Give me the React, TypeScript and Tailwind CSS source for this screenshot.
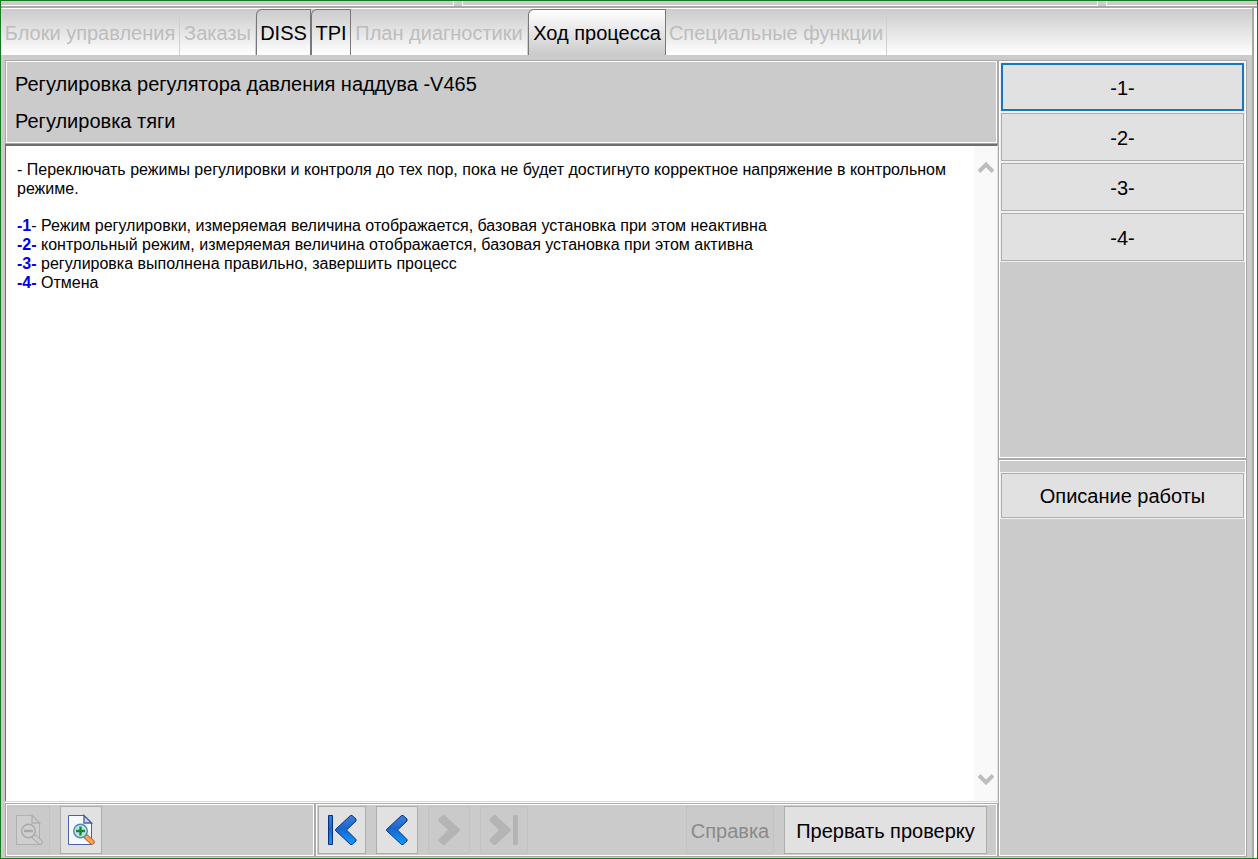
import { useState } from "react";
import clsx from "clsx";

const tabs = [
  { title: "Блоки управления", enabled: false, width: "w-[179px]" },
  { title: "Заказы", enabled: false, width: "w-[76px]" },
  { title: "DISS", enabled: true, width: "w-[55px]" },
  { title: "TPI", enabled: true, width: "w-[40px]" },
  { title: "План диагностики", enabled: false, width: "w-[177px]" },
  { title: "Ход процесса", enabled: true, width: "w-[138px]" },
  { title: "Специальные функции", enabled: false, width: "w-[221px]" },
];

const steps = [
  { key: "-1", tail: "-", text: "Режим регулировки, измеряемая величина отображается, базовая установка при этом неактивна" },
  { key: "-2-", tail: "", text: "контрольный режим, измеряемая величина отображается, базовая установка при этом активна" },
  { key: "-3-", tail: "", text: "регулировка выполнена правильно, завершить процесс" },
  { key: "-4-", tail: "", text: "Отмена" },
];

const answers = ["-1-", "-2-", "-3-", "-4-"];

function ZoomIcon({ plus = false, disabled = false }) {
  const line = disabled ? "#b0b0b0" : "#4a62a0";
  return (
    <svg width="28" height="32" viewBox="0 0 28 32" aria-hidden="true">
      <path d="M1.500 1.500H17L24.500 9V30.500H1.500Z" fill={disabled ? "#cfcfcf" : "#f4faff"} stroke={line} />
      <path d="M17 1.500V9H24.500Z" fill={disabled ? "#cfcfcf" : "#c9d8f5"} stroke={line} strokeWidth="1.400" />
      <path d="M19.500 23L25 28" stroke={disabled ? "#aaaaaa" : "#b8693a"} strokeWidth="5.500" strokeLinecap="round" />
      <path d="M19.500 23L25 28" stroke={disabled ? "#cecece" : "#ffa54f"} strokeWidth="3.500" strokeLinecap="round" />
      <circle cx="13.500" cy="17" r="6.800" fill={disabled ? "#cfcfcf" : "#bfe3f2"} stroke={disabled ? "#a8a8a8" : "#5589a8"} strokeWidth="1.400" />
      <path d={plus ? "M9 17H18M13.500 12.500V21.500" : "M9 17H18"} stroke={disabled ? "#a8a8a8" : "#168a2c"} strokeWidth="2.400" />
    </svg>
  );
}

function ArrowIcon({ bar = false, forward = false, disabled = false }) {
  return (
    <svg
      width={bar ? 30 : 22}
      height="32"
      viewBox={bar ? "0 0 30 32" : "8 0 22 32"}
      className={forward ? "-scale-x-100" : ""}
      aria-hidden="true"
    >
      <defs>
        <linearGradient id="arrowBlue" x1="0" y1="0" x2="0" y2="1">
          <stop offset="0" stopColor="#3f7fdc" />
          <stop offset="0.45" stopColor="#1766cf" />
          <stop offset="1" stopColor="#0c9bff" />
        </linearGradient>
      </defs>
      <g fill={disabled ? "#b4b4b4" : "url(#arrowBlue)"} stroke={disabled ? "#b4b4b4" : "#0b2f78"} strokeLinejoin="round">
        {bar && <rect x="1.500" y="1.500" width="4" height="29" />}
        <path d="M23.500 1.500H25L29 5V7L19.500 16L29 25.500V27L25 30.500H23.500L8.500 16.500V15.500Z" />
      </g>
    </svg>
  );
}

type SideButtonProps = {
  label: string;
  size?: string;
  focused?: boolean;
  onClick?: () => void;
};

function SideButton({ label, size = "h-12 pt-0.5", focused = false, onClick }: SideButtonProps) {
  return (
    <button
      type="button"
      onClick={onClick}
      className={clsx(
        "w-full bg-[#e1e1e1] text-[20px] leading-6 outline-none",
        size,
        focused ? "border-2 border-[#1577bd]" : "border border-[#adadad]"
      )}
    >
      {label}
    </button>
  );
}

const toolButton = "h-12 flex items-center justify-center border";
const toolOn = "border-[#adadad] bg-[#e1e1e1]";
const toolOff = "border-[#c2c2c2] bg-[#cacaca]";
// grey outer line with a white line inside it
const panel = "border border-[#a9a9a9] bg-white p-px";

export default function App() {
  const [tab, setTab] = useState("Ход процесса");
  const [answer, setAnswer] = useState("-1-");

  return (
    <div className="h-screen flex flex-col overflow-hidden border border-[#167a20] bg-[#cbcbcb] font-['Liberation_Sans',Arial,sans-serif] text-black">
      <div className="h-[7px] shrink-0 flex gap-2 border-b-2 border-[#a9a9a9]">
        <div className="w-[453px] border-r border-b border-white" />
        <div className="flex-1 border-x border-b border-white" />
        <div className="w-[151px] border-l border-b border-white" />
      </div>

      <div className="flex-1 min-h-0 flex">
        <div className="flex-1 min-w-0 flex flex-col">
          <div className="h-[47px] shrink-0 flex border-t border-white bg-linear-to-b from-[#cbcbcb] to-white" role="tablist">
            {tabs.map((item) => (
              <button
                key={item.title}
                type="button"
                role="tab"
                aria-selected={tab === item.title}
                disabled={!item.enabled}
                onClick={() => setTab(item.title)}
                className={clsx(
                  "shrink-0 whitespace-nowrap text-[20px]",
                  item.width,
                  item.enabled
                    ? "border-x border-t border-[#777777] rounded-tl-md"
                    : "pt-px text-[#bdbdbd] border-r border-[#cfcfcf]",
                  tab === item.title && "bg-linear-to-b from-white to-[#cbcbcb]"
                )}
              >
                {item.title}
              </button>
            ))}
          </div>

          <div className="flex-1 min-h-0 flex pt-[5px] pl-1 pr-[5px] pb-px">
            <main className="flex-1 min-w-0 flex flex-col">
              <div className={panel}>
                <div className="h-20 bg-[#cbcbcb] pl-2 text-[20px]">
                  <h1 className="h-[37px] pt-1 leading-[37px]">Регулировка регулятора давления наддува -V465</h1>
                  <h2 className="h-[37px] pt-1 leading-[37px]">Регулировка тяги</h2>
                </div>
              </div>

              <div className="flex-1 min-h-0 flex border-t-2 border-l border-r border-t-[#6e6e6e] border-l-[#6e6e6e] border-r-[#e3e3e3] bg-white">
                <div className="flex-1 pl-[11px] pt-3.5 pr-5 text-[16px] leading-[19px]">
                  <p>
                    - Переключать режимы регулировки и контроля до тех пор, пока не будет достигнуто корректное напряжение в контрольном режиме.
                  </p>
                  <ul className="mt-[18px]">
                    {steps.map((step) => (
                      <li key={step.key}>
                        <b className="text-[#0000e6]">{step.key}</b>
                        {step.tail} {step.text}
                      </li>
                    ))}
                  </ul>
                </div>
                <div className="w-[23px] flex flex-col justify-between items-center bg-[#f9f9f9] py-3.5">
                  <button type="button" aria-label="Вверх">
                    <svg width="16" height="14" viewBox="0 0 16 14">
                      <path d="M1 11.500L8 4.500L15 11.500" fill="none" stroke="#bdbdbd" strokeWidth="4" />
                    </svg>
                  </button>
                  <button type="button" aria-label="Вниз">
                    <svg width="16" height="14" viewBox="0 0 16 14">
                      <path d="M1 2.500L8 9.500L15 2.500" fill="none" stroke="#bdbdbd" strokeWidth="4" />
                    </svg>
                  </button>
                </div>
              </div>

              <div className="flex shrink-0 border-t border-[#d8d8d8] bg-white pt-px">
                <div className={clsx(panel, "w-[310px]")}>
                  <div className="flex gap-2.5 bg-[#cbcbcb] h-[50px] py-px">
                    <button type="button" disabled aria-label="Уменьшить" className={clsx(toolButton, toolOff, "w-[43px]")}>
                      <ZoomIcon disabled />
                    </button>
                    <button type="button" aria-label="Увеличить" className={clsx(toolButton, toolOn, "w-[42px]")}>
                      <ZoomIcon plus />
                    </button>
                  </div>
                </div>
                <div className={clsx(panel, "flex-1")}>
                  <div className="flex gap-2.5 bg-[#cbcbcb] h-[50px] py-px pl-px pr-[9px]">
                    <button type="button" aria-label="В начало" className={clsx(toolButton, toolOn, "w-12")}>
                      <ArrowIcon bar />
                    </button>
                    <button type="button" aria-label="Назад" className={clsx(toolButton, toolOn, "w-[42px]")}>
                      <ArrowIcon />
                    </button>
                    <button type="button" disabled aria-label="Вперёд" className={clsx(toolButton, toolOff, "w-[42px]")}>
                      <ArrowIcon forward disabled />
                    </button>
                    <button type="button" disabled aria-label="В конец" className={clsx(toolButton, toolOff, "w-12")}>
                      <ArrowIcon bar forward disabled />
                    </button>
                    <button type="button" disabled className={clsx(toolButton, toolOff, "ml-auto w-[88px] pt-0.5 text-[20px] text-[#8a8a8a]")}>
                      Справка
                    </button>
                    <button type="button" className={clsx(toolButton, toolOn, "w-[203px] pt-0.5 text-[20px]")}>
                      Прервать проверку
                    </button>
                  </div>
                </div>
              </div>
            </main>

            <aside className="w-[249px] shrink-0 flex flex-col">
              <div className={clsx(panel, "h-[399px]")}>
                <div className="h-full bg-[#cbcbcb]">
                  <div className="flex flex-col gap-0.5 bg-[#f0f0f0] p-px">
                    {answers.map((label) => (
                      <SideButton key={label} label={label} focused={answer === label} onClick={() => setAnswer(label)} />
                    ))}
                  </div>
                </div>
              </div>
              <div className={clsx(panel, "flex-1")}>
                <div className="h-full bg-[#cbcbcb] pt-[11px]">
                  <div className="bg-[#f0f0f0] p-px">
                    <SideButton label="Описание работы" size="h-[45px]" />
                  </div>
                </div>
              </div>
            </aside>
          </div>
        </div>
        <div className="w-[5px] border-l-2 border-[#a9a9a9] bg-white" />
      </div>
    </div>
  );
}
